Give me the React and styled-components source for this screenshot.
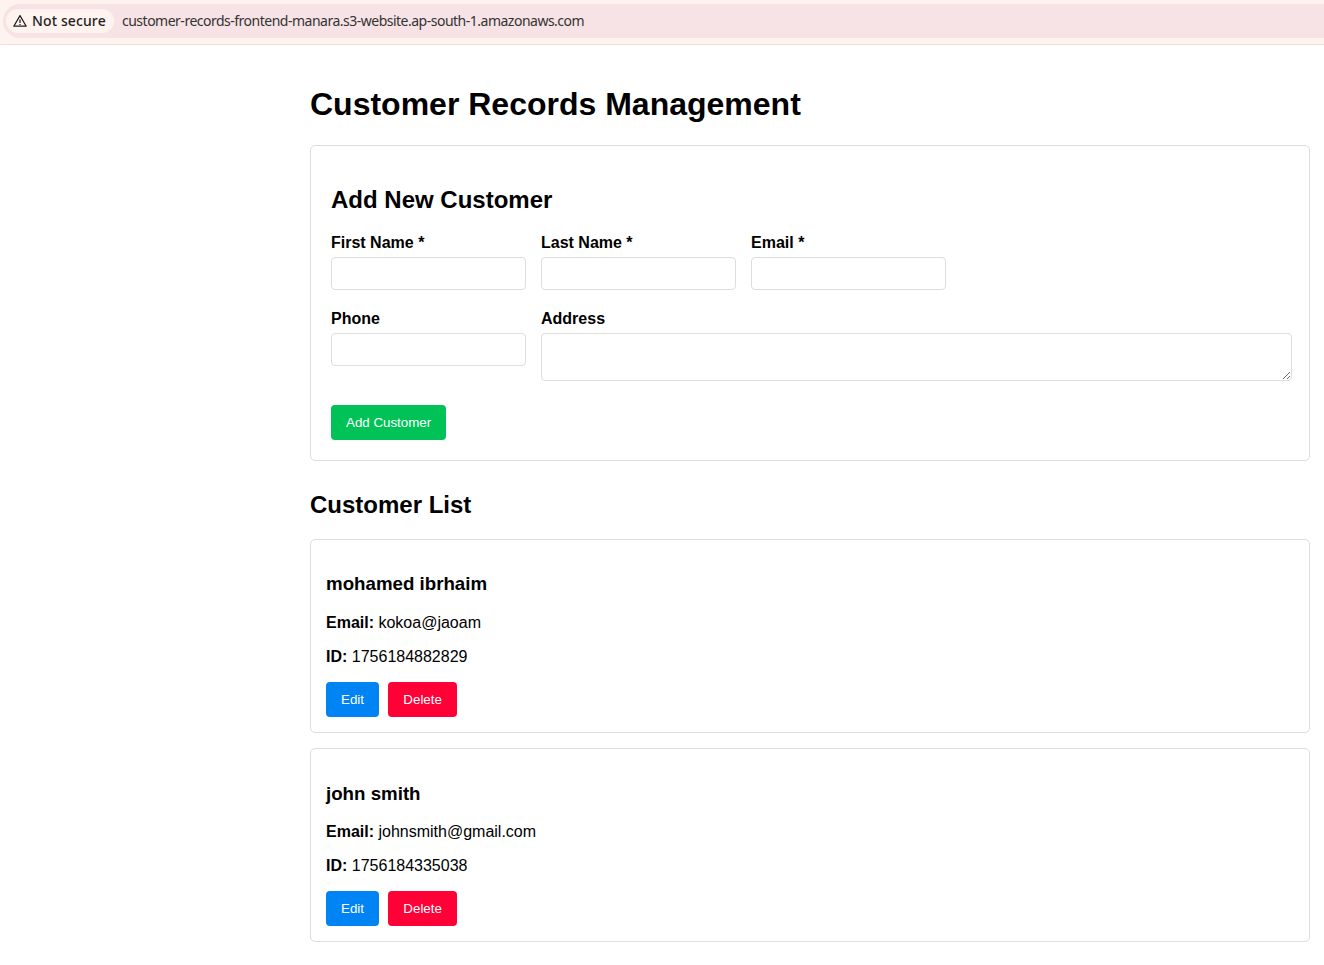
import React from "react";
import styled, { createGlobalStyle } from "styled-components";

const Global = createGlobalStyle`
  html, body { margin: 0; padding: 0; background: #fff; }
  body { font-family: "Liberation Sans", Arial, sans-serif; color: #000; font-size: 16px; }
  * { box-sizing: border-box; }
`;
const Chrome = styled.div`
  height: 45px;
  background: #fff3f0;
  border-bottom: 1px solid #fcdcd4;
  padding: 4px 0 0 3px;
`;
const Omnibox = styled.div`
  height: 34px;
  background: #f7e3e5;
  border-radius: 17px 0 0 17px;
  display: flex;
  align-items: center;
  padding-left: 3px;
`;
const Chip = styled.div`
  height: 24px;
  width: 108px;
  border-radius: 12px;
  background: #fff3f0;
  display: flex;
  align-items: center;
  gap: 5px;
  padding-left: 7px;
`;
const ChipText = styled.span`
  padding-bottom: 2px;
  font: 500 14px "Noto Sans", sans-serif;
  letter-spacing: 0.12px;
  color: #1f1f1f;
`;
const Url = styled.span`
  margin-left: 8px;
  padding-bottom: 2px;
  font: 400 14px "Noto Sans", sans-serif;
  letter-spacing: -0.5px;
  color: #333;
`;
const Page = styled.main`
  width: 1000px;
  margin-left: 310px;
  padding-bottom: 22px;
`;
const Title = styled.h1`
  margin: 0;
  padding-top: 41px;
  font-size: 32px;
  line-height: 37px;
  font-weight: 700;
`;
const FormCard = styled.section`
  margin-top: 22px;
  border: 1px solid #ddd;
  border-radius: 5px;
  padding: 20px;
`;
const SectionTitle = styled.h2`
  margin: 20px 0 21px;
  font-size: 24px;
  line-height: 27px;
  font-weight: 700;
`;
const ListTitle = styled(SectionTitle)`
  margin: 30px 0 20.6px;
`;
const FieldRow = styled.div`
  display: flex;
  gap: 15px;
  margin-bottom: ${(p) => p.$gap}px;
`;
const Field = styled.div`
  display: flex;
  flex-direction: column;
  flex: 0 0 ${(p) => p.$w}px;
`;
const Label = styled.label`
  font-weight: 700;
  font-size: 16px;
  line-height: 18px;
  margin-bottom: 5px;
`;
const Input = styled.input`
  height: 33px;
  width: 100%;
  border: 1px solid #ddd;
  border-radius: 4px;
  background: #fff;
`;
const TextArea = styled.textarea`
  display: block;
  height: 48px;
  width: 100%;
  border: 1px solid #ddd;
  border-radius: 4px;
  background: #fff;
`;
const Button = styled.button`
  height: 35px;
  padding: 0 15px;
  border: none;
  border-radius: 4px;
  background: ${(p) => p.$bg};
  color: #fff;
  font: 400 13.333px "Liberation Sans", Arial, sans-serif;
`;
const CustomerCard = styled.article`
  border: 1px solid #ddd;
  border-radius: 5px;
  padding: 15px;
  margin-bottom: 15.2px;
`;
const Name = styled.h3`
  margin: 18.72px 0 19px;
  font-size: 18.72px;
  line-height: 21.5px;
  font-weight: 700;
`;
const Line = styled.p`
  margin: 16px 0;
  font-size: 16px;
  line-height: 18px;
`;
const Actions = styled.div`
  display: flex;
  gap: 9.4px;
`;

const customers = [
  { name: "mohamed ibrhaim", email: "kokoa@jaoam", id: "1756184882829" },
  { name: "john smith", email: "johnsmith@gmail.com", id: "1756184335038" },
];

export default function App() {
  return (
    <>
      <Global />
      <Chrome>
        <Omnibox>
          <Chip>
            <svg width="14" height="14" viewBox="0 0 14 14" fill="none" stroke="#1f1f1f" strokeWidth="1.25" strokeLinejoin="round">
              <path d="M7 1.6 13.2 12.2H.8Z" />
              <path d="M7 5.4v3.6M7 9.9v1" />
            </svg>
            <ChipText>Not secure</ChipText>
          </Chip>
          <Url>customer-records-frontend-manara.s3-website.ap-south-1.amazonaws.com</Url>
        </Omnibox>
      </Chrome>
      <Page>
        <Title>Customer Records Management</Title>
        <FormCard>
          <SectionTitle>Add New Customer</SectionTitle>
          <FieldRow $gap={20}>
            <Field $w={195}><Label>First Name *</Label><Input /></Field>
            <Field $w={195}><Label>Last Name *</Label><Input /></Field>
            <Field $w={195}><Label>Email *</Label><Input /></Field>
          </FieldRow>
          <FieldRow $gap={24}>
            <Field $w={195}><Label>Phone</Label><Input /></Field>
            <Field $w={751}><Label>Address</Label><TextArea /></Field>
          </FieldRow>
          <Button $bg="#00c257">Add Customer</Button>
        </FormCard>
        <ListTitle>Customer List</ListTitle>
        {customers.map((c) => (
          <CustomerCard key={c.id}>
            <Name>{c.name}</Name>
            <Line><b>Email:</b> {c.email}</Line>
            <Line><b>ID:</b> {c.id}</Line>
            <Actions>
              <Button $bg="#0084f4">Edit</Button>
              <Button $bg="#ff0037">Delete</Button>
            </Actions>
          </CustomerCard>
        ))}
      </Page>
    </>
  );
}
